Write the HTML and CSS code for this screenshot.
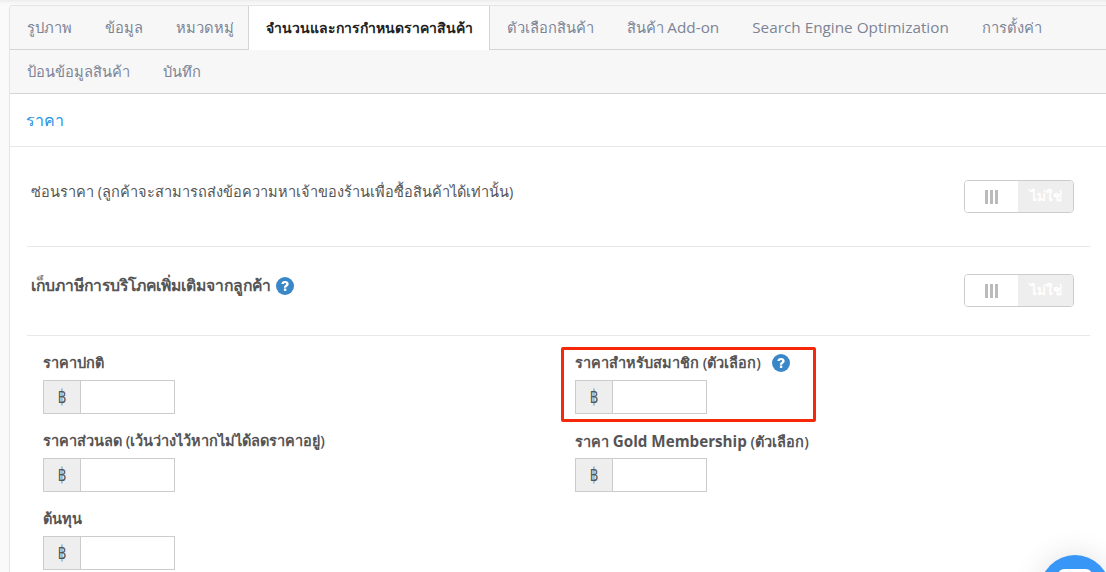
FILE: index.html
```html
<!DOCTYPE html>
<html lang="th">
<head>
<meta charset="utf-8">
<title>ราคา</title>
<link rel="stylesheet" href="styles.css">
</head>
<body>
<div class="panel">
  <nav class="tabs">
    <div class="tab-row">
      <a class="tab">รูปภาพ</a>
      <a class="tab">ข้อมูล</a>
      <a class="tab">หมวดหมู่</a>
      <a class="tab active">จำนวนและการกำหนดราคาสินค้า</a>
      <a class="tab">ตัวเลือกสินค้า</a>
      <a class="tab">สินค้า <span class="latin">Add-on</span></a>
      <a class="tab"><span class="latin">Search Engine Optimization</span></a>
      <a class="tab">การตั้งค่า</a>
    </div>
    <div class="tab-row">
      <a class="tab">ป้อนข้อมูลสินค้า</a>
      <a class="tab">บันทึก</a>
    </div>
  </nav>
  <h2 class="section-title">ราคา</h2>
  <div class="content">
    <div class="option option-first">
      <div class="option-label">ซ่อนราคา (ลูกค้าจะสามารถส่งข้อความหาเจ้าของร้านเพื่อซื้อสินค้าได้เท่านั้น)</div>
      <div class="toggle"><span class="toggle-handle"><i></i><i></i><i></i></span><span class="toggle-off">ไม่ใช่</span></div>
    </div>
    <div class="option">
      <div class="option-label option-strong">เก็บภาษีการบริโภคเพิ่มเติมจากลูกค้า
        <svg class="help" viewBox="0 0 18 18"><circle cx="9" cy="9" r="9" fill="#3a87c8"/><path d="M5.400 7a3.600 3.200 0 0 1 3.700-3c2.100 0 3.600 1.200 3.600 2.900 0 2.300-2.400 2.100-2.400 3.800H7.900c0-2.700 2.200-2.600 2.200-3.700 0-.6-.4-1-1.100-1-.7 0-1.100.4-1.300 1.100z" fill="#fff"/><rect x="7.900" y="11.500" width="2.400" height="2.400" fill="#fff"/></svg>
      </div>
      <div class="toggle"><span class="toggle-handle"><i></i><i></i><i></i></span><span class="toggle-off">ไม่ใช่</span></div>
    </div>
    <div class="price-grid">
      <div class="field">
        <label class="field-label">ราคาปกติ</label>
        <div class="input-group"><span class="addon"><span class="baht">฿</span></span><span class="input"></span></div>
      </div>
      <div class="field highlighted">
        <label class="field-label">ราคาสำหรับสมาชิก (ตัวเลือก)
          <svg class="help help-gap" viewBox="0 0 18 18"><circle cx="9" cy="9" r="9" fill="#3a87c8"/><path d="M5.400 7a3.600 3.200 0 0 1 3.700-3c2.100 0 3.600 1.200 3.600 2.900 0 2.300-2.400 2.100-2.400 3.800H7.900c0-2.700 2.200-2.600 2.200-3.700 0-.6-.4-1-1.100-1-.7 0-1.100.4-1.300 1.100z" fill="#fff"/><rect x="7.900" y="11.500" width="2.400" height="2.400" fill="#fff"/></svg>
        </label>
        <div class="input-group"><span class="addon"><span class="baht">฿</span></span><span class="input"></span></div>
      </div>
      <div class="field">
        <label class="field-label">ราคาส่วนลด (เว้นว่างไว้หากไม่ได้ลดราคาอยู่)</label>
        <div class="input-group"><span class="addon"><span class="baht">฿</span></span><span class="input"></span></div>
      </div>
      <div class="field">
        <label class="field-label">ราคา <span class="latin-bold">Gold Membership</span> (ตัวเลือก)</label>
        <div class="input-group"><span class="addon"><span class="baht">฿</span></span><span class="input"></span></div>
      </div>
      <div class="field">
        <label class="field-label">ต้นทุน</label>
        <div class="input-group"><span class="addon"><span class="baht">฿</span></span><span class="input"></span></div>
      </div>
    </div>
  </div>
</div>
<div class="chat-button">
  <svg viewBox="0 0 34 30" class="chat-icon"><rect x="0" y="0" width="34" height="26" rx="6" fill="#fff"/></svg>
</div>
</body>
</html>
```
FILE: styles.css
```css
*, *::before { box-sizing: border-box; }
html, body { margin: 0; height: 572px; overflow: hidden; }
body {
  font-family: "Open Sans", "Noto Sans", "Liberation Sans", sans-serif;
  color: #555;
  font-size: 14px;
  padding-top: 5px;
  padding-left: 9px;
  background: #fafafa;
  box-shadow: inset 0 4px 4px -3px #e6e6e6;
}
.panel {
  background: #fff;
  border: 1px solid #e4e4e4;
  border-right: 0;
  border-bottom: 0;
  border-top-left-radius: 4px;
  height: 567px;
  overflow: hidden;
}
.tabs { background: #f7f7f7; }
.tab-row {
  display: flex;
  height: 44px;
  border-bottom: 1px solid #d5d5d5;
}
.tab {
  display: block;
  padding: 0 16.500px;
  line-height: 43px;
  font-size: 14.700px;
  color: #7d8496;
  white-space: nowrap;
}
.latin { font-size: 15.300px; }
.tab.active {
  background: #fff;
  color: #222;
  font-size: 14px;
  font-weight: 600;
  height: 44px;
  margin-left: -2px;
  border-left: 1px solid #d5d5d5;
  border-right: 1px solid #d5d5d5;
}
.section-title {
  margin: 0;
  height: 53px;
  padding-left: 16px;
  line-height: 52px;
  font-size: 16px;
  font-weight: 400;
  color: #2b93e6;
  border-bottom: 1px solid #e8e8e8;
}
.content { padding: 0 16px 0 17px; }
.option {
  display: flex;
  justify-content: space-between;
  height: 89px;
  padding: 27px 16px 0 4px;
  border-bottom: 1px solid #e8e8e8;
}
.option-first { height: 100px; padding-top: 33px; }
.option-label { font-size: 14.550px; color: #555; line-height: 22px; }
.option-strong { font-weight: 600; font-size: 15.700px; }
.help { width: 18px; height: 18px; vertical-align: -4px; margin-left: 1px; }
.help-gap { margin-left: 7px; }
.toggle {
  display: flex;
  width: 110px;
  height: 33px;
  border: 1px solid #ccc;
  border-radius: 4px;
  overflow: hidden;
  flex: none;
}
.toggle-handle {
  flex: 1;
  display: flex;
  gap: 2px;
  align-items: center;
  justify-content: center;
  background: #fff;
}
.toggle-handle i { display: block; width: 3px; height: 14px; background: #bbb; }
.toggle-off {
  width: 55px;
  background: #eee;
  color: #fff;
  font-weight: 700;
  text-align: center;
  line-height: 30px;
  font-size: 13.500px;
}
.price-grid {
  display: grid;
  grid-template-columns: 532px 1fr;
  grid-auto-rows: 78px;
  padding: 16px 0 0 16px;
}
.field { position: relative; }
.field-label {
  display: block;
  height: 28px;
  font-size: 14.500px;
  font-weight: 600;
  color: #555;
  line-height: 22px;
}
.latin-bold { font-size: 15.200px; font-weight: 700; }
.highlighted::before {
  content: "";
  position: absolute;
  left: -14px;
  top: -5px;
  width: 255px;
  height: 75px;
  border: 3px solid #f5290a;
  border-radius: 2px;
}
.input-group { display: flex; width: 132px; height: 34px; border: 1px solid #ccc; }
.addon {
  width: 37px;
  background: #eee;
  border-right: 1px solid #ccc;
  text-align: center;
  line-height: 31px;
  font-family: "DejaVu Sans", sans-serif;
  font-size: 19px;
  color: #555;
}
.baht { display: inline-block; transform: scaleX(.72); }
.input { flex: 1; background: #fff; }
.chat-button {
  position: fixed;
  left: 1040px;
  top: 555px;
  width: 70px;
  height: 70px;
  border-radius: 50%;
  background: #3796f6;
  box-shadow: 0 0 30px rgba(0,0,0,.12);
  display: flex;
  justify-content: center;
  padding-top: 14px;
}
.chat-icon { width: 34px; height: 30px; }
```
